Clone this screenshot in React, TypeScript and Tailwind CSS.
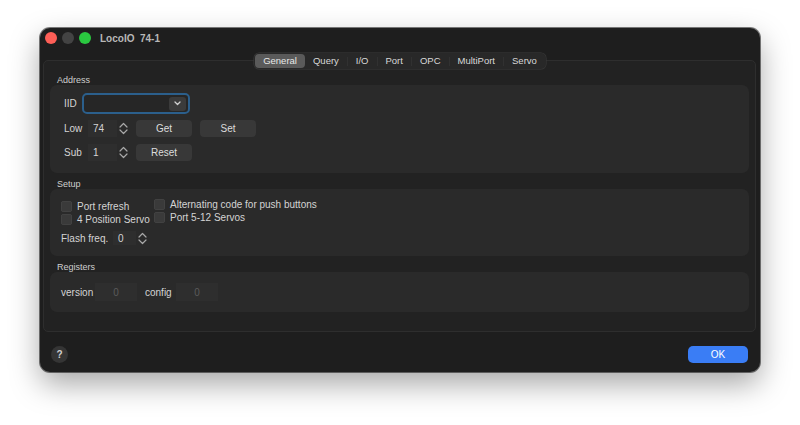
import React from 'react'

const font = { fontFamily: '"Liberation Sans", Arial, sans-serif' }

function Stepper() {
  return (
    <div className="flex h-full w-[12px] flex-col items-center justify-center gap-[1px] text-[#a8a8a8]">
      <svg width="9" height="6" viewBox="0 0 9 6" fill="none">
        <path d="M1 5 L4.5 1.5 L8 5" stroke="currentColor" strokeWidth="1.2" strokeLinecap="round" strokeLinejoin="round" />
      </svg>
      <svg width="9" height="6" viewBox="0 0 9 6" fill="none">
        <path d="M1 1 L4.5 4.5 L8 1" stroke="currentColor" strokeWidth="1.2" strokeLinecap="round" strokeLinejoin="round" />
      </svg>
    </div>
  )
}

function Button({ children, w = 'w-[56px]' }: { children: React.ReactNode; w?: string }) {
  return (
    <div className={`${w} flex h-[17px] items-center justify-center rounded-[4px] bg-[#383838] text-[10px] text-[#dcdcdc]`}>
      {children}
    </div>
  )
}

function Check({ label }: { label: string }) {
  return (
    <div className="flex h-[13px] items-center gap-[5px]">
      <div className="h-[11px] w-[11px] rounded-[3px] bg-[#3a3a3a] shadow-[inset_0_0_0_0.5px_#4a4a4a]" />
      <span className="text-[10px] text-[#d4d4d4]">{label}</span>
    </div>
  )
}

function Section({ title, children, className }: { title: string; children: React.ReactNode; className: string }) {
  return (
    <div className="flex flex-col">
      <div className="h-[10px] pl-[7px] text-[9px] leading-[10px] text-[#cfcfcf]">{title}</div>
      <div className={`rounded-[7px] bg-[#2a2a2a] ${className}`}>{children}</div>
    </div>
  )
}

const tabs = ['General', 'Query', 'I/O', 'Port', 'OPC', 'MultiPort', 'Servo']

export default function App() {
  return (
    <div className="min-h-[425px] w-[800px] bg-white pt-[28px] pl-[40px]" style={font}>
      <div className="flex h-[344px] w-[720px] flex-col rounded-[10px] bg-[#1e1e1e] shadow-[0_12px_30px_rgba(0,0,0,0.35),0_0_0_1px_rgba(0,0,0,0.5)]">
        {/* title bar */}
        <div className="flex h-[20px] items-center pl-[5px]">
          <div className="flex gap-[5px]">
            <div className="h-[12px] w-[12px] rounded-full bg-[#fe5f57]" />
            <div className="h-[12px] w-[12px] rounded-full bg-[#434343]" />
            <div className="h-[12px] w-[12px] rounded-full bg-[#2ac840]" />
          </div>
          <span className="ml-[9px] whitespace-pre text-[10px] font-bold text-[#b8b8b8]">LocoIO  74-1</span>
        </div>

        {/* tabs */}
        <div className="relative z-10 mt-[5px] -mb-[9px] flex justify-center">
          <div className="flex h-[16px] items-center rounded-[5px] bg-[#282828] p-[1px] shadow-[0_0_0_0.5px_#3a3a3a]">
            {tabs.map((t, i) => (
              <React.Fragment key={t}>
                {i > 1 && <div className="h-[9px] w-px bg-[#313131]" />}
                <div
                  className={`flex h-[14px] items-center px-[8px] text-[9.5px] ${
                    i === 0 ? 'rounded-[4px] bg-[#5a5a5a] text-[#e8e8e8]' : 'text-[#d8d8d8]'
                  }`}
                >
                  {t}
                </div>
              </React.Fragment>
            ))}
          </div>
        </div>

        {/* tab panel */}
        <div className="ml-[3px] mr-[4px] flex h-[272px] flex-col gap-[6px] rounded-[5px] border border-[#2e2e2e] bg-[#222222] px-[6px] pt-[14px]">
          <Section title="Address" className="flex h-[88px] flex-col gap-[6px] pl-[14px] pt-[8px]">
            <div className="flex h-[21px] items-center">
              <span className="w-[18px] text-[10px] text-[#d4d4d4]">IID</span>
              <div className="flex h-[21px] w-[108px] items-center justify-end rounded-[5px] border-2 border-[#2b5f8c] bg-[#262626] pr-[2px]">
                <div className="flex h-[14px] w-[17px] items-center justify-center rounded-[3px] bg-[#3b3b3b]">
                  <svg width="7" height="5" viewBox="0 0 7 5" fill="none">
                    <path d="M1 1 L3.5 3.5 L6 1" stroke="#d0d0d0" strokeWidth="1.3" strokeLinecap="round" strokeLinejoin="round" />
                  </svg>
                </div>
              </div>
            </div>
            <div className="flex h-[17px] items-center">
              <span className="w-[24px] text-[10px] text-[#d4d4d4]">Low</span>
              <div className="flex h-[17px] w-[29px] items-center bg-[#2e2e2e] pl-[5px] text-[10px] text-[#d4d4d4]">74</div>
              <Stepper />
              <div className="ml-[7px] flex gap-[8px]">
                <Button>Get</Button>
                <Button>Set</Button>
              </div>
            </div>
            <div className="mt-[1px] flex h-[17px] items-center">
              <span className="w-[24px] text-[10px] text-[#d4d4d4]">Sub</span>
              <div className="flex h-[17px] w-[29px] items-center bg-[#2e2e2e] pl-[5px] text-[10px] text-[#d4d4d4]">1</div>
              <Stepper />
              <div className="ml-[7px]">
                <Button>Reset</Button>
              </div>
            </div>
          </Section>

          <Section title="Setup" className="flex h-[67px] flex-col pl-[11px] pt-[9px]">
            <div className="flex">
              <div className="w-[93px] pt-[2px]">
                <Check label="Port refresh" />
                <Check label="4 Position Servo" />
              </div>
              <div>
                <Check label="Alternating code for push buttons" />
                <Check label="Port 5-12 Servos" />
              </div>
            </div>
            <div className="mt-[5px] flex h-[14px] items-center">
              <span className="w-[52px] text-[10px] text-[#d4d4d4]">Flash freq.</span>
              <div className="flex h-[14px] w-[23px] items-center bg-[#2e2e2e] pl-[5px] text-[10px] text-[#d4d4d4]">0</div>
              <Stepper />
            </div>
          </Section>

          <Section title="Registers" className="flex h-[40px] items-center pl-[11px]">
            <span className="w-[34px] text-[10px] text-[#d4d4d4]">version</span>
            <div className="flex h-[18px] w-[42px] items-center justify-center bg-[#2e2e2e] text-[10px] text-[#5a5a5a]">0</div>
            <span className="ml-[8px] w-[31px] text-[10px] text-[#d4d4d4]">config</span>
            <div className="flex h-[18px] w-[42px] items-center justify-center bg-[#2e2e2e] text-[10px] text-[#5a5a5a]">0</div>
          </Section>
        </div>

        {/* bottom bar */}
        <div className="flex flex-1 items-center justify-between pl-[11px] pr-[12px] pt-[4px]">
          <div className="flex h-[17px] w-[17px] items-center justify-center rounded-full bg-[#353535] text-[10px] font-bold text-[#cfcfcf]">?</div>
          <div className="flex h-[17px] w-[60px] items-center justify-center rounded-[5px] bg-[#3a7df5] text-[10px] text-white">OK</div>
        </div>
      </div>
    </div>
  )
}
